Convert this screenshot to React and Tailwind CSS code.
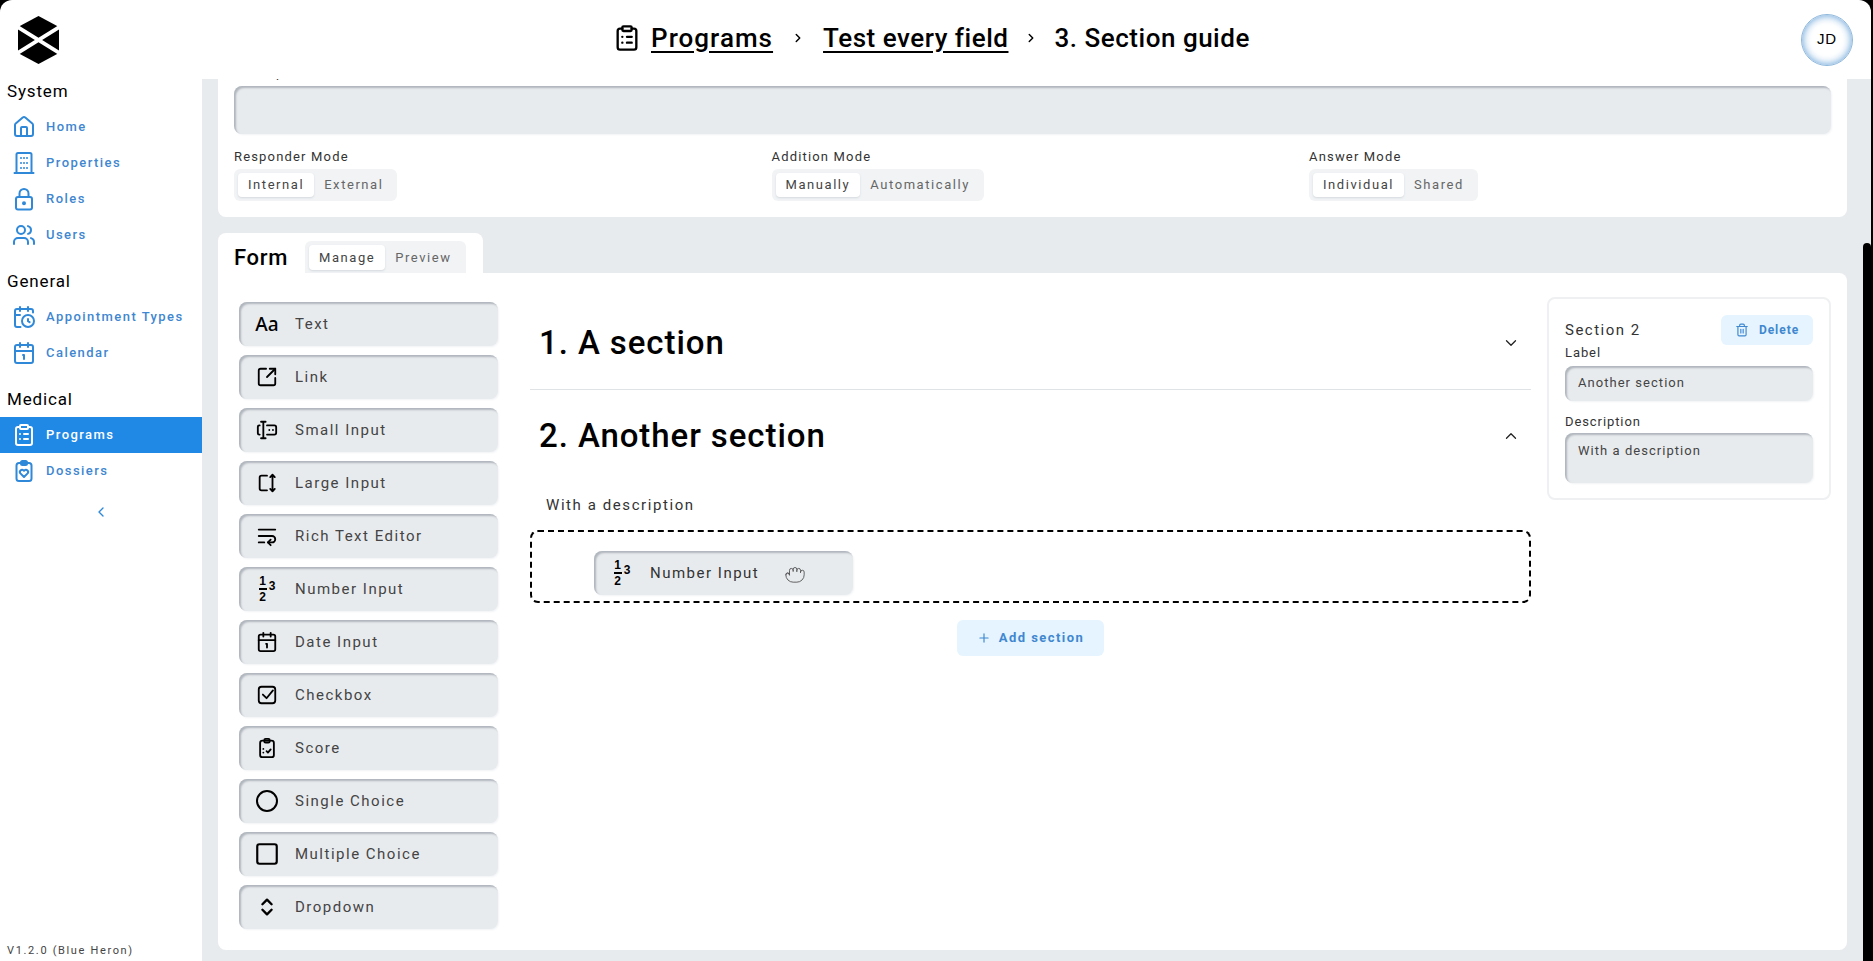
import React from "react";
import {
  House,
  Users,
  CalendarClock,
  Calendar1,
  ClipboardList,
  ChevronLeft,
  ChevronRight,
  ChevronDown,
  ChevronUp,
  ChevronsUpDown,
  SquareArrowOutUpRight,
  WrapText,
  Circle,
  Square,
  Trash2,
  Plus,
  Grab,
} from "lucide-react";

const inset =
  "bg-[#e8ebee] rounded-lg shadow-[inset_2px_2px_2px_#b0b6bd,1px_1px_2px_#f1f3f5]";

const Logo = () => (
  <svg viewBox="0 0 41 48" className="w-[41px] h-[48px]">
    <polygon points="20.5,0 41,11 41,37 20.5,48 0,37 0,11" fill="#000" />
    <line x1="-2" y1="10" x2="43" y2="38" stroke="#fff" strokeWidth="4" />
    <line x1="43" y1="10" x2="-2" y2="38" stroke="#fff" strokeWidth="4" />
  </svg>
);

const BuildingIcon = (props) => (
  <svg viewBox="0 0 24 24" fill="none" stroke="currentColor" strokeWidth="2" strokeLinecap="round" {...props}>
    <path d="M2.5 22h19M4.5 22V3.5A1.5 1.5 0 0 1 6 2h12a1.5 1.5 0 0 1 1.5 1.5V22" />
    <path d="M9 7h.01M15 7h.01M9 12h.01M15 12h.01M9 17h.01M15 17h.01M12 7h.01M12 12h.01M12 17h.01" />
  </svg>
);

const LockIcon = (props) => (
  <svg viewBox="0 0 24 24" fill="none" stroke="currentColor" strokeWidth="2" strokeLinecap="round" {...props}>
    <rect x="4" y="10" width="16" height="12.5" rx="2" />
    <path d="M7.5 10V6.5a4.5 4.5 0 0 1 9 0V10" />
    <circle cx="12" cy="16.2" r="1" fill="currentColor" />
  </svg>
);

const HeartClipIcon = (props) => (
  <svg viewBox="0 0 24 24" fill="none" stroke="currentColor" strokeWidth="2" strokeLinecap="round" strokeLinejoin="round" {...props}>
    <rect x="4.5" y="4" width="15" height="18" rx="2.5" />
    <rect x="9" y="2" width="6" height="4" rx="1.5" />
    <path d="M12 18l-3.6-3.6a2.2 2.2 0 0 1 3.1-3.1l.5.5.5-.5a2.2 2.2 0 0 1 3.1 3.1z" />
  </svg>
);

const ScoreIcon = (props) => (
  <svg viewBox="0 0 24 24" fill="none" stroke="currentColor" strokeWidth="2" strokeLinecap="round" strokeLinejoin="round" {...props}>
    <rect x="4.5" y="4" width="15" height="18" rx="2.5" />
    <rect x="9" y="2" width="6" height="4" rx="1.5" />
    <path d="M8 13h.01M8 17h.01M11.5 15.5l1.5 1.5 3-3.5" />
  </svg>
);

const SmallInputIcon = (props) => (
  <svg viewBox="0 0 24 24" fill="none" stroke="currentColor" strokeWidth="2" strokeLinecap="round" strokeLinejoin="round" {...props}>
    <path d="M8 3v18M5.5 3h5M5.5 21h5" />
    <path d="M4 7h-.5A1.5 1.5 0 0 0 2 8.5v7A1.5 1.5 0 0 0 3.5 17H4" />
    <path d="M12 7h8a2 2 0 0 1 2 2v6a2 2 0 0 1-2 2h-8" />
    <path d="M14.5 12h.01M18.5 12h.01" />
  </svg>
);

const LargeInputIcon = (props) => (
  <svg viewBox="0 0 24 24" fill="none" stroke="currentColor" strokeWidth="2.2" strokeLinecap="round" strokeLinejoin="round" {...props}>
    <path d="M12 4H6a2 2 0 0 0-2 2v12a2 2 0 0 0 2 2h6" />
    <path d="M18 3v18M15.5 5.5L18 3l2.5 2.5M15.5 18.5L18 21l2.5-2.5" />
  </svg>
);

const CheckIcon = (props) => (
  <svg viewBox="0 0 24 24" fill="none" stroke="currentColor" strokeWidth="2.2" strokeLinecap="round" strokeLinejoin="round" {...props}>
    <rect x="3" y="3" width="18" height="18" rx="3" />
    <path d="M7.5 11.5l4 4 7-8.5" />
  </svg>
);

const AaIcon = () => (
  <span className="font-['Noto_Sans',sans-serif] font-medium text-[19px] leading-none text-black">
    Aa
  </span>
);

const NumberIcon = () => (
  <span className="flex items-center gap-[2px] font-['Liberation_Sans',sans-serif] font-bold text-[12px] leading-none text-black">
    <span className="flex flex-col items-center">
      <span>1</span>
      <span className="w-[8px] h-[1.5px] bg-black my-[1px]" />
      <span>2</span>
    </span>
    <span className="-mt-[6px]">3</span>
  </span>
);

const navGroups = [
  {
    title: "System",
    items: [
      { label: "Home", icon: House },
      { label: "Properties", icon: BuildingIcon },
      { label: "Roles", icon: LockIcon },
      { label: "Users", icon: Users },
    ],
  },
  {
    title: "General",
    items: [
      { label: "Appointment Types", icon: CalendarClock },
      { label: "Calendar", icon: Calendar1 },
    ],
  },
  {
    title: "Medical",
    items: [
      { label: "Programs", icon: ClipboardList, active: true },
      { label: "Dossiers", icon: HeartClipIcon },
    ],
  },
];

const fields = [
  { label: "Text", custom: <AaIcon /> },
  { label: "Link", icon: SquareArrowOutUpRight },
  { label: "Small Input", icon: SmallInputIcon },
  { label: "Large Input", icon: LargeInputIcon },
  { label: "Rich Text Editor", icon: WrapText },
  { label: "Number Input", custom: <NumberIcon /> },
  { label: "Date Input", icon: Calendar1 },
  { label: "Checkbox", icon: CheckIcon },
  { label: "Score", icon: ScoreIcon },
  { label: "Single Choice", icon: Circle, mid: true },
  { label: "Multiple Choice", icon: Square, big: true },
  { label: "Dropdown", icon: ChevronsUpDown, bold: true },
];

const Segment = ({ on, off, className = "" }) => (
  <div className={"flex bg-[#f1f3f5] rounded-md p-[4px] text-[13px] tracking-[0.12em] " + className}>
    <span className="flex items-center px-[10px] bg-white rounded-[4px] text-[#444] shadow-[0_1px_2px_#d5d9dd]">
      {on}
    </span>
    <span className="flex items-center px-[10px] text-[#666]">{off}</span>
  </div>
);

const ModeField = ({ label, on, off }) => (
  <div className="w-[537.5px] shrink-0 flex flex-col items-start">
    <span className="h-[24px] leading-[24px] text-[13px] tracking-[0.09em] text-[#333]">{label}</span>
    <Segment on={on} off={off} className="h-[32px]" />
  </div>
);

const FieldItem = ({ field }) => {
  const Icon = field.icon;
  let size = "w-[22px] h-[22px] text-black";
  if (field.big) size = "w-[26px] h-[26px] text-black";
  if (field.mid) size = "w-[24px] h-[24px] text-black";
  return (
    <div className={inset + " flex items-center h-[44px]"}>
      <span className="w-[56px] flex justify-center shrink-0">
        {field.custom || <Icon className={size} strokeWidth={field.bold ? 2.6 : 2} />}
      </span>
      <span className="text-[15px] tracking-[0.1em] text-[#444]">{field.label}</span>
    </div>
  );
};

const Sidebar = () => (
  <aside className="w-[202px] shrink-0 flex flex-col bg-white relative">
    {navGroups.map((group) => (
      <div key={group.title} className="mb-[16px]">
        <div className="pl-[7px] h-[26px] mb-[4px] flex items-center text-[17px] tracking-[0.05em] text-black">
          {group.title}
        </div>
        {group.items.map((item) => {
          const Icon = item.icon;
          return (
            <div
              key={item.label}
              className={
                "h-[36px] flex items-center pl-[12px] gap-[10px] text-[13px] font-medium tracking-[0.112em] " +
                (item.active ? "bg-[#2089e6] text-white font-bold" : "text-[#3f87d0]")
              }
            >
              <Icon className={"w-[24px] h-[24px] " + (item.active ? "text-white" : "text-[#2f88d8]")} strokeWidth={2} />
              <span>{item.label}</span>
            </div>
          );
        })}
      </div>
    ))}
    <div className="flex justify-center -mt-[1px]">
      <ChevronLeft className="w-[16px] h-[16px] text-[#2f88d8]" strokeWidth={2} />
    </div>
    <div className="mt-auto mb-[2px] pl-[7px] text-[11px] tracking-[0.15em] text-[#444]">V1.2.0 (Blue Heron)</div>
  </aside>
);

const SectionHeader = ({ title, open }) => (
  <div className="flex items-center justify-between h-[92px] pl-[9px] pr-[11px]">
    <span className="text-[33px] font-medium tracking-[0.028em] text-black">{title}</span>
    {open ? (
      <ChevronUp className="w-[18px] h-[18px] text-[#222]" strokeWidth={1.75} />
    ) : (
      <ChevronDown className="w-[18px] h-[18px] text-[#222]" strokeWidth={1.75} />
    )}
  </div>
);

const App = () => {
  return (
    <div className="h-screen bg-black pr-[2px] overflow-hidden font-['Roboto',sans-serif]">
      <div className="h-full flex flex-col bg-white rounded-t-xl overflow-hidden">
        <header className="h-[79px] shrink-0 flex items-center relative">
          <div className="w-[202px] pl-[18px] pt-[1px]">
            <Logo />
          </div>
          <nav className="absolute left-[613px] top-[16px] flex items-center text-[26px] font-medium tracking-[0.02em] text-black h-[44px]">
            <ClipboardList className="w-[28px] h-[28px] mr-[10px]" strokeWidth={2} />
            <span className="underline underline-offset-4 tracking-[0.04em]">Programs</span>
            <ChevronRight className="w-[14px] h-[14px] mx-[18px]" strokeWidth={2.5} />
            <span className="underline underline-offset-4">Test every field</span>
            <ChevronRight className="w-[14px] h-[14px] mx-[16px]" strokeWidth={2.5} />
            <span>3. Section guide</span>
          </nav>
          <div className="ml-auto mr-[18px] w-[52px] h-[52px] rounded-full flex items-center justify-center bg-white border border-[#8fb8dc] shadow-[inset_0_0_8px_#5b9bd5] text-[15px] tracking-[0.05em] font-['Liberation_Sans',sans-serif] text-black">
            JD
          </div>
        </header>

        <div className="flex-1 flex min-h-0">
          <Sidebar />
          <main className="flex-1 relative overflow-hidden bg-[#e8ebee] pl-[16px] pr-[24px]">
            <section className="-mt-[16px] bg-white rounded-b-lg px-[16px] h-[154px]">
              <div className="h-[23px] text-[13px] leading-[20px] tracking-[0.07em] text-[#333]">Description</div>
              <div className={inset + " h-[48px]"} />
              <div className="flex mt-[11px]">
                <ModeField label="Responder Mode" on="Internal" off="External" />
                <ModeField label="Addition Mode" on="Manually" off="Automatically" />
                <ModeField label="Answer Mode" on="Individual" off="Shared" />
              </div>
            </section>

            <div className="mt-[16px] w-[265px] h-[40px] bg-white rounded-t-lg flex items-end pl-[16px]">
              <span className="w-[71px] h-[32px] text-[22px] font-medium tracking-[0.03em] text-black leading-[34px]">Form</span>
              <div className="flex h-[32px] bg-[#f1f3f5] rounded-t-md px-[4px] pt-[4px] text-[13px] tracking-[0.12em]">
                <span className="flex items-center h-[25px] px-[10px] bg-white rounded-[4px] text-[#444] shadow-[0_1px_2px_#d5d9dd]">Manage</span>
                <span className="flex items-center h-[25px] px-[10px] text-[#666]">Preview</span>
              </div>
            </div>

            <section className="h-[677px] bg-white rounded-b-lg rounded-tr-lg flex pl-[21px] pr-[16px] pt-[24px] gap-[16px]">
              <div className="w-[259px] shrink-0 mt-[5px] mr-[16px] flex flex-col gap-[9px]">
                {fields.map((f) => (
                  <FieldItem key={f.label} field={f} />
                ))}
              </div>

              <div className="flex-1 flex flex-col">
                <SectionHeader title="1. A section" />
                <div className="h-px bg-[#dfe3e6]" />
                <SectionHeader title="2. Another section" open />
                <div className="pl-[16px] mt-[13px] h-[20px] text-[15px] leading-[20px] tracking-[0.105em] text-[#333]">With a description</div>
                <div className="mt-[15px] h-[73px] border-2 border-dashed border-black rounded-lg pl-[62px] pt-[19px]">
                  <div className={inset + " w-[259px] h-[44px] flex items-center"}>
                    <span className="w-[56px] flex justify-center shrink-0">
                      <NumberIcon />
                    </span>
                    <span className="text-[15px] tracking-[0.1em] text-[#333]">Number Input</span>
                    <Grab className="w-[22px] h-[22px] ml-[25px] text-[#555]" strokeWidth={1} />
                  </div>
                </div>
                <div className="flex justify-center mt-[17px]">
                  <button className="w-[147px] h-[36px] bg-[#e5f4fe] rounded-md flex items-center justify-center gap-[8px] text-[13px] font-bold tracking-[0.11em] text-[#3f87d0]">
                    <Plus className="w-[14px] h-[14px]" strokeWidth={2} />
                    Add section
                  </button>
                </div>
              </div>

              <div className="w-[284px] h-[203px] shrink-0 border-2 border-[#eef0f2] rounded-lg pl-[16px] pr-[16px] pt-[16px]">
                <div className="flex items-center justify-between h-[30px]">
                  <span className="text-[15px] tracking-[0.1em] text-[#333]">Section 2</span>
                  <button className="w-[92px] h-[30px] bg-[#e5f4fe] rounded-md flex items-center justify-center gap-[10px] text-[12px] font-bold tracking-[0.08em] text-[#3f87d0]">
                    <Trash2 className="w-[14px] h-[14px]" strokeWidth={2} />
                    Delete
                  </button>
                </div>
                <div className="h-[21px] leading-[16px] text-[13px] tracking-[0.07em] text-[#333]">Label</div>
                <div className={inset + " h-[35px] flex items-center pl-[13px] pb-[1px] text-[13px] tracking-[0.08em] text-[#444]"}>Another section</div>
                <div className="mt-[13px] h-[19px] leading-[16px] text-[13px] tracking-[0.07em] text-[#333]">Description</div>
                <div className={inset + " h-[50px] pl-[13px] pt-[9px] leading-[18px] text-[13px] tracking-[0.08em] text-[#444]"}>With a description</div>
              </div>
            </section>

            <div className="absolute right-0 top-[164px] bottom-0 w-[8px] bg-black rounded-t-lg" />
          </main>
        </div>
      </div>
    </div>
  );
};

export default App;
